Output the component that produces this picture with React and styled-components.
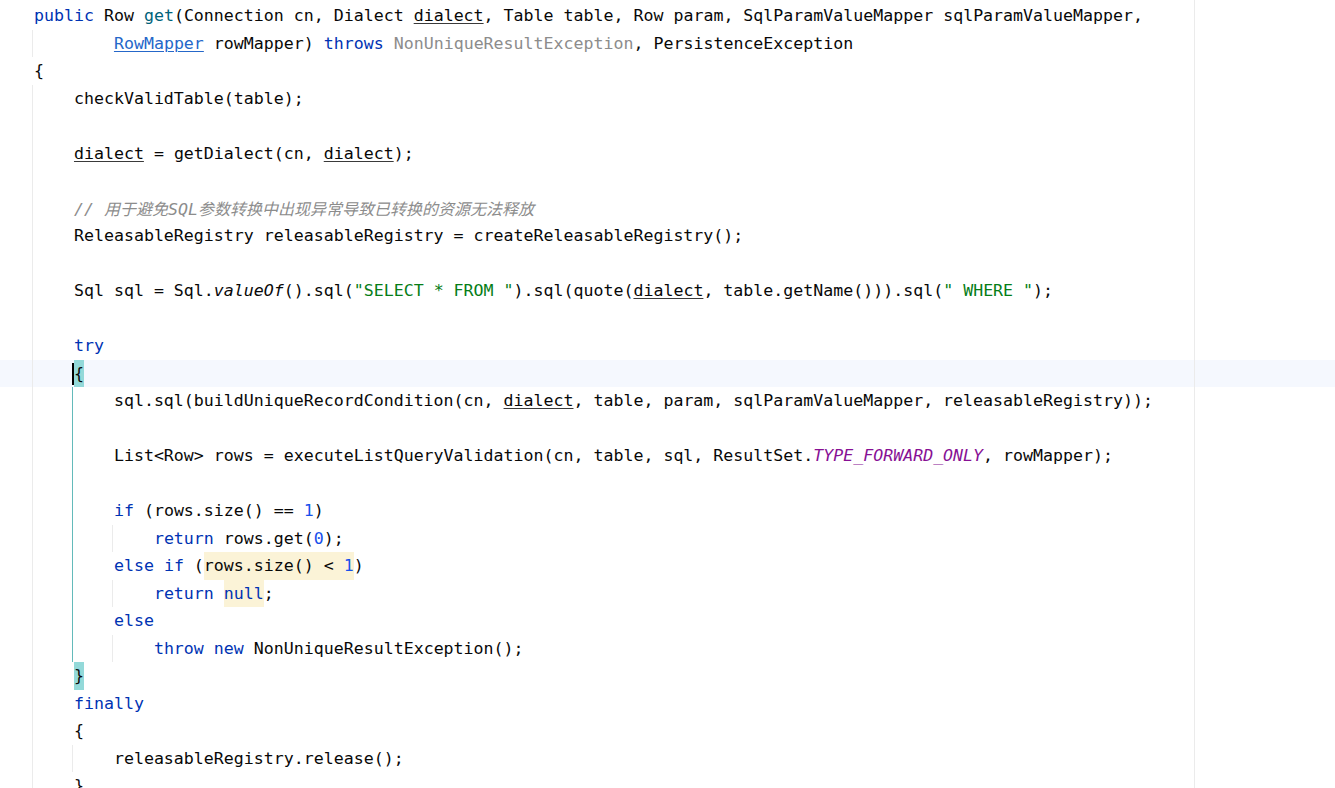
import React from "react";
import styled, { createGlobalStyle } from "styled-components";

const GlobalStyle = createGlobalStyle`
  html, body {
    margin: 0;
    padding: 0;
    background: #ffffff;
  }
`;

const colors = {
  id: "#080808",
  kw: "#0033B3",
  fn: "#00627A",
  ul: "#080808",
  link: "#2567C9",
  dim: "#8C8C8C",
  str: "#067D17",
  num: "#1750EB",
  it: "#080808",
  konst: "#871094",
  cm: "#8C8C8C",
};

const italicKinds = ["it", "konst", "cm"];

// [text] = plain, [kind, text] or [kind, text, "hl"]
const lines = [
  [["kw", "public"], " Row ", ["fn", "get"], "(Connection cn, Dialect ", ["ul", "dialect"], ", Table table, Row param, SqlParamValueMapper sqlParamValueMapper,"],
  ["        ", ["link", "RowMapper"], " rowMapper) ", ["kw", "throws"], " ", ["dim", "NonUniqueResultException"], ", PersistenceException"],
  ["{"],
  ["    checkValidTable(table);"],
  [],
  ["    ", ["ul", "dialect"], " = getDialect(cn, ", ["ul", "dialect"], ");"],
  [],
  ["    ", ["comment", ""]],
  ["    ReleasableRegistry releasableRegistry = createReleasableRegistry();"],
  [],
  ["    Sql sql = Sql.", ["it", "valueOf"], "().sql(", ["str", '"SELECT * FROM "'], ").sql(quote(", ["ul", "dialect"], ", table.getName())).sql(", ["str", '" WHERE "'], ");"],
  [],
  ["    ", ["kw", "try"]],
  ["    ", ["brace", "{"]],
  ["        sql.sql(buildUniqueRecordCondition(cn, ", ["ul", "dialect"], ", table, param, sqlParamValueMapper, releasableRegistry));"],
  [],
  ["        List<Row> rows = executeListQueryValidation(cn, table, sql, ResultSet.", ["konst", "TYPE_FORWARD_ONLY"], ", rowMapper);"],
  [],
  ["        ", ["kw", "if"], " (rows.size() == ", ["num", "1"], ")"],
  ["            ", ["kw", "return"], " rows.get(", ["num", "0"], ");"],
  ["        ", ["kw", "else if"], " (", ["id", "rows.size() < ", "hl"], ["num", "1", "hl"], ")"],
  ["            ", ["kw", "return"], " ", ["kw", "null", "hl"], ";"],
  ["        ", ["kw", "else"]],
  ["            ", ["kw", "throw new"], " NonUniqueResultException();"],
  ["    ", ["braceEnd", "}"]],
  ["    ", ["kw", "finally"]],
  ["    {"],
  ["        releasableRegistry.release();"],
  ["    }"],
];

// indent guides per line number (1-based): [col, active]
function guidesFor(n) {
  const g = [];
  if (n === 2 || n >= 4) g.push([0, false]);
  if (n >= 15 && n <= 24) g.push([4, true]);
  if (n === 28) g.push([4, false]);
  if (n === 20 || n === 22 || n === 24) g.push([8, false]);
  return g;
}

const Editor = styled.div`
  position: relative;
  display: flex;
  flex-direction: column;
  height: 788px;
  overflow: hidden;
  padding-top: 2px;
  box-sizing: border-box;
  font-family: "DejaVu Sans Mono", "Noto Sans CJK SC", monospace;
  font-size: 16.6px;
  color: #080808;
`;

const RightMargin = styled.div`
  position: absolute;
  top: 0;
  bottom: 0;
  left: 1194px;
  width: 1px;
  background: #ebebeb;
  z-index: 2;
`;

const Line = styled.div`
  position: relative;
  flex: 0 0 27.5px;
  height: 27.5px;
  line-height: 27.5px;
  padding-left: 34px;
  white-space: pre;
  background: ${(p) => (p.$current ? "#F5F8FE" : "transparent")};
`;

const Guide = styled.span`
  position: absolute;
  top: 0;
  bottom: 0;
  left: ${(p) => 32 + p.$col * 10}px;
  width: 1px;
  background: ${(p) => (p.$active ? "#63BABA" : "#EBEBEB")};
`;

const Tok = styled.span`
  color: ${(p) => colors[p.$k] || colors.id};
  font-style: ${(p) => (italicKinds.includes(p.$k) ? "italic" : "normal")};
  text-decoration: ${(p) => (p.$k === "ul" || p.$k === "link" ? "underline" : "none")};
  text-decoration-thickness: 1px;
  text-underline-offset: 2px;
  text-decoration-color: ${(p) => (p.$k === "link" ? colors.link : "#3a3a3a")};
`;

const Highlight = styled(Tok)`
  display: inline-block;
  height: 27.5px;
  line-height: 27.5px;
  vertical-align: top;
  background: #fbf3d7;
`;

const Brace = styled.span`
  position: relative;
  display: inline-block;
  height: 27.5px;
  line-height: 27.5px;
  vertical-align: top;
  background: #93d9d9;
`;

const Caret = styled.span`
  position: absolute;
  left: -2px;
  top: 3px;
  width: 2px;
  height: 22px;
  background: #000000;
`;

const Cjk = styled.span`
  font-family: "Noto Sans CJK SC", sans-serif;
  font-size: 16px;
`;

function Comment() {
  return (
    <Tok $k="cm">
      {"// "}
      <Cjk>用于避免</Cjk>
      SQL
      <Cjk>参数转换中出现异常导致已转换的资源无法释放</Cjk>
    </Tok>
  );
}

function Token({ token }) {
  if (typeof token === "string") return <Tok $k="id">{token}</Tok>;
  const [kind, text, flag] = token;
  if (kind === "comment") return <Comment />;
  if (kind === "brace")
    return (
      <Brace>
        <Caret />
        {text}
      </Brace>
    );
  if (kind === "braceEnd") return <Brace>{text}</Brace>;
  if (flag === "hl") return <Highlight $k={kind}>{text}</Highlight>;
  return <Tok $k={kind}>{text}</Tok>;
}

export default function App() {
  return (
    <>
      <GlobalStyle />
      <Editor>
        {lines.map((tokens, i) => (
          <Line key={i} $current={i + 1 === 14}>
            {guidesFor(i + 1).map(([col, active]) => (
              <Guide key={col} $col={col} $active={active} />
            ))}
            {tokens.map((t, j) => (
              <Token key={j} token={t} />
            ))}
          </Line>
        ))}
        <RightMargin />
      </Editor>
    </>
  );
}
